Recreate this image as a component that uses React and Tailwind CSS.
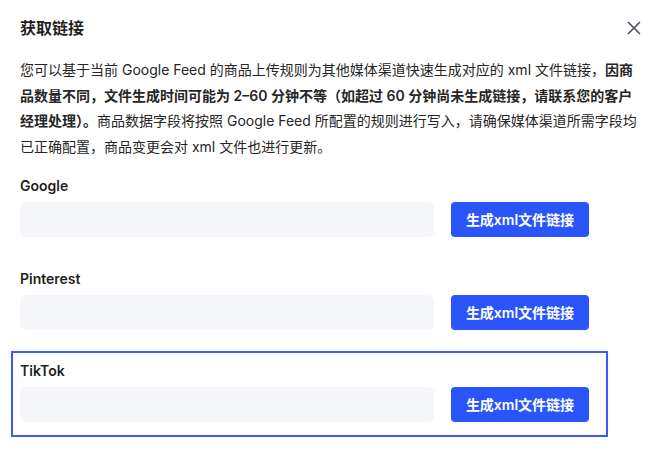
export default function App() {
  const rows = ["Google", "Pinterest"];

  return (
    <div
      className="w-[664px] h-[451px] bg-white text-[#1f1f1f] overflow-hidden"
      style={{ fontFamily: 'Inter, "Noto Sans CJK SC", sans-serif' }}
    >
      <div className="px-5 pt-[18px]">

        {/* Header */}
        <div className="flex items-center justify-between h-5">
          <h2 className="text-base font-bold leading-5">获取链接</h2>
          <svg
            width="14"
            height="14"
            viewBox="0 0 14 14"
            className="mr-[3px] text-[#4a4f5a]"
            fill="none"
            stroke="currentColor"
            strokeWidth="1.6"
            strokeLinecap="round"
          >
            <path d="M1.5 1.5L12.5 12.5M12.5 1.5L1.5 12.5" />
          </svg>
        </div>

        {/* Description */}
        <p className="mt-[19px] text-sm leading-[25.5px] text-[#262626] w-[624px]">
          您可以基于当前 Google Feed 的商品上传规则为其他媒体渠道快速生成对应的 xml 文件链接，
          <span className="font-semibold">
            因商品数量不同，文件生成时间可能为 2–60 分钟不等（如超过 60 分钟尚未生成链接，请联系您的客户经理处理）。
          </span>
          商品数据字段将按照 Google Feed 所配置的规则进行写入，请确保媒体渠道所需字段均已正确配置，商品变更会对 xml 文件也进行更新。
        </p>

        {/* Channels */}
        <div className="mt-[17px] flex flex-col gap-8">
          {rows.map((name) => (
            <div key={name}>
              <div className="text-sm font-semibold leading-5 mb-[6px]">{name}</div>
              <div className="flex gap-[17px]">
                <div className="w-[414px] h-[35px] rounded-md bg-[#f5f6f9]" />
                <button className="w-[138px] h-[35px] rounded-[4px] bg-[#2b55fa] text-white text-sm font-semibold">
                  生成xml文件链接
                </button>
              </div>
            </div>
          ))}
        </div>

        <div className="mt-[21px] ml-[-9px] w-[597px] border-2 border-[#3a5cf7] pl-[7px] pt-2 pb-[13px]">
          <div className="text-sm font-semibold leading-5 mb-[6px]">TikTok</div>
          <div className="flex gap-[17px]">
            <div className="w-[414px] h-[35px] rounded-md bg-[#f5f6f9]" />
            <button className="w-[138px] h-[35px] rounded-[4px] bg-[#2b55fa] text-white text-sm font-semibold">
              生成xml文件链接
            </button>
          </div>
        </div>

      </div>
    </div>
  );
}
